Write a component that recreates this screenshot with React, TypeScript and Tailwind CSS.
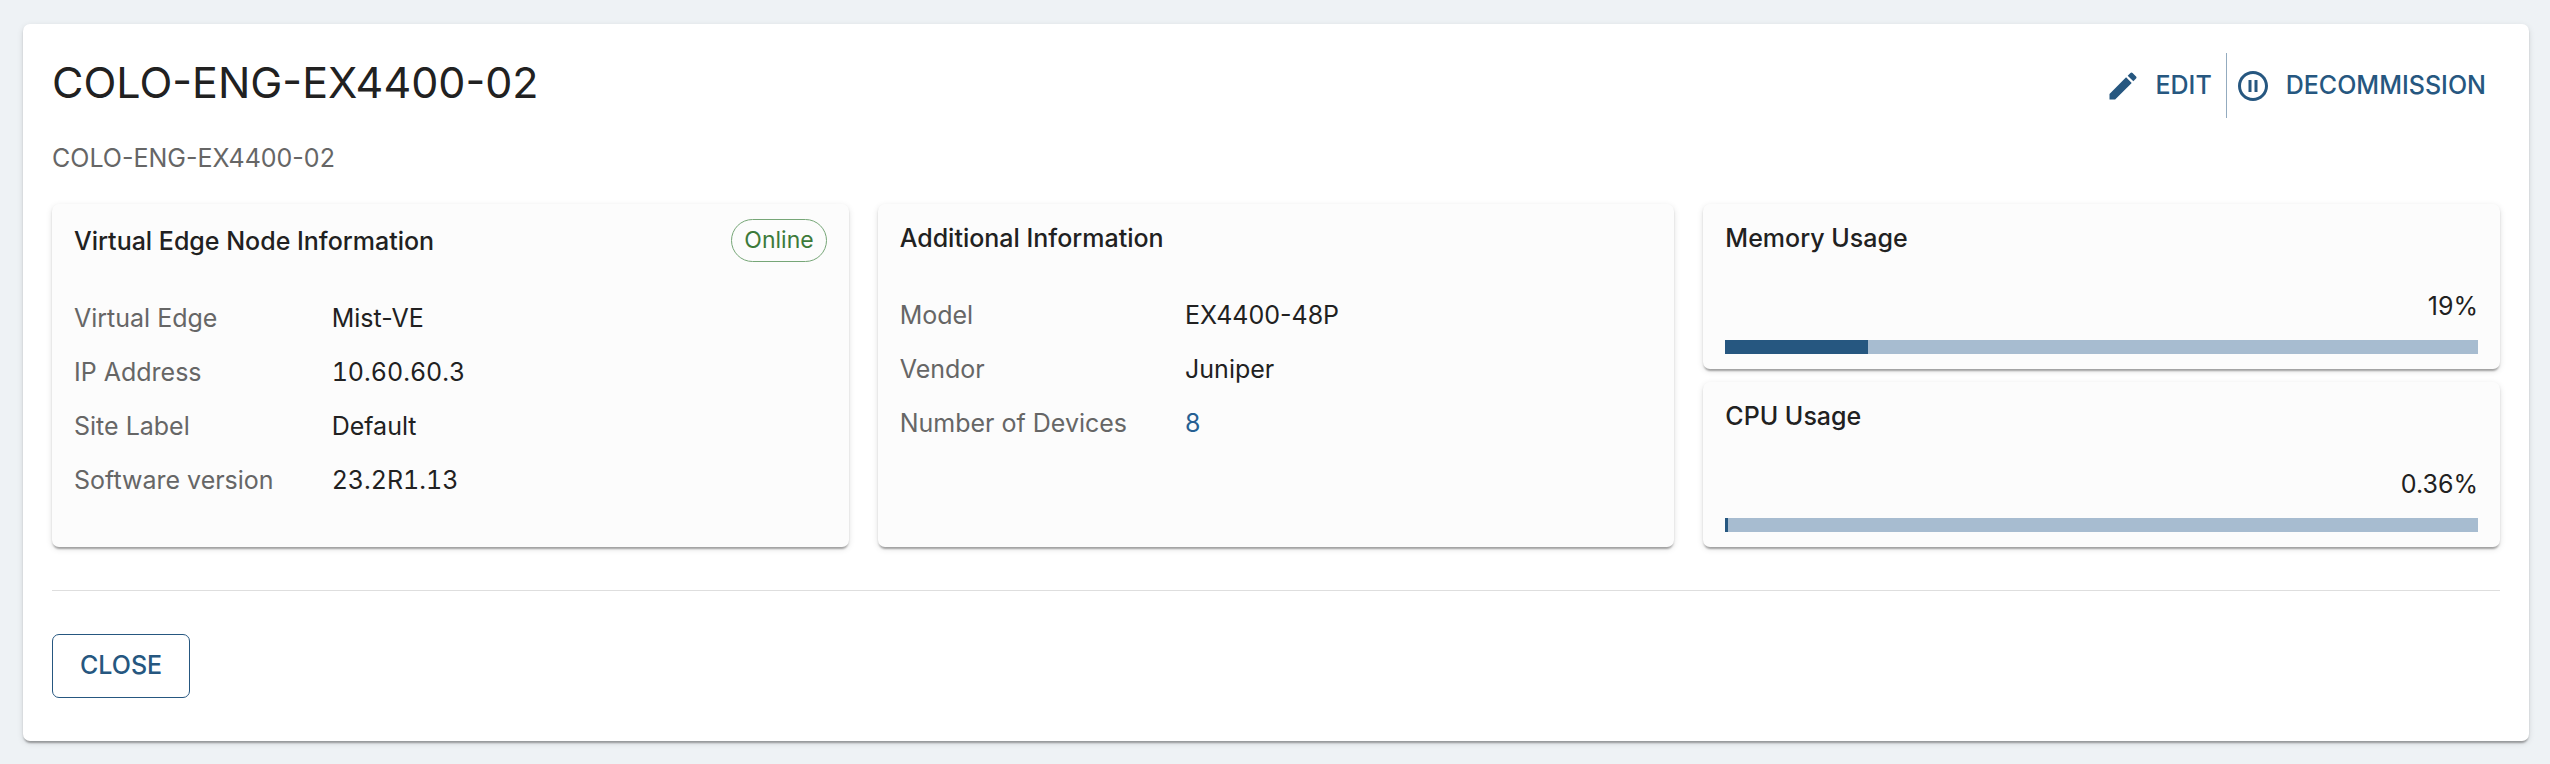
import type { ReactNode } from "react";

const CARD_SHADOW =
  "shadow-[0_4px_2px_-2px_rgba(0,0,0,0.2),0_2px_2px_rgba(0,0,0,0.14),0_2px_6px_rgba(0,0,0,0.12)]";

function Card({ children }: { children: ReactNode }) {
  return (
    <section className={`rounded-[7px] bg-[#fcfcfc] px-[22px] py-[15px] ${CARD_SHADOW}`}>
      {children}
    </section>
  );
}

function CardTitle({ children }: { children: ReactNode }) {
  return <h2 className="text-[25px] leading-[38px] font-medium">{children}</h2>;
}

function Details({ rows }: { rows: [string, ReactNode][] }) {
  return (
    <dl className="grid grid-cols-[max-content_1fr] gap-x-[58px] gap-y-4 leading-[38px]">
      {rows.map(([label, value]) => (
        <div key={label} className="contents">
          <dt className="text-[#666666]">{label}</dt>
          <dd>{value}</dd>
        </div>
      ))}
    </dl>
  );
}

function Usage({ title, value }: { title: string; value: number }) {
  return (
    <Card>
      <CardTitle>{title}</CardTitle>
      <p className="mt-[30px] text-right leading-[38px]">{value}%</p>
      <div
        role="progressbar"
        aria-label={title}
        aria-valuenow={value}
        aria-valuemin={0}
        aria-valuemax={100}
        className="mt-[15px] h-[14px] bg-[#a7bcd0]"
      >
        <div className="h-full bg-[#265780]" style={{ width: `${value}%` }} />
      </div>
    </Card>
  );
}

function EditIcon() {
  return (
    <svg viewBox="0 0 24 24" className="size-9" fill="currentColor" aria-hidden="true">
      <path d="M3 17.25V21h3.75L17.81 9.94l-3.75-3.75zM20.71 7.04c.39-.39.39-1.02 0-1.41l-2.34-2.34a.996.996 0 0 0-1.41 0l-1.83 1.83 3.75 3.75z" />
    </svg>
  );
}

function PauseIcon() {
  return (
    <svg viewBox="0 0 24 24" className="size-9" fill="currentColor" aria-hidden="true">
      <path d="M12 2C6.48 2 2 6.48 2 12s4.48 10 10 10 10-4.48 10-10S17.52 2 12 2m0 18c-4.41 0-8-3.59-8-8s3.59-8 8-8 8 3.59 8 8-3.59 8-8 8" />
      <path d="M9 8h2v8H9zm4 0h2v8h-2z" />
    </svg>
  );
}

export default function App() {
  return (
    <div className="min-h-screen bg-[#eef2f5] pt-6 pr-[21px] pb-[23px] pl-[23px] font-['Inter',sans-serif] text-[25px] text-[#212121]">
      <main className={`rounded-[7px] bg-white px-[29px] pt-[29px] pb-[43px] ${CARD_SHADOW}`}>
        <header className="flex items-start justify-between">
          <div>
            <h1 className="text-[43px] leading-[58px]">COLO-ENG-EX4400-02</h1>
            <p className="mt-7 leading-[38px] text-[#666666]">COLO-ENG-EX4400-02</p>
          </div>
          <div className="flex h-[65px] items-stretch font-medium text-[#265780]">
            <button type="button" className="flex items-center gap-[15px] pr-[14px]">
              <EditIcon />
              EDIT
            </button>
            <button
              type="button"
              className="flex items-center gap-[15px] border-l border-[#93abbf] pr-[14px] pl-2"
            >
              <PauseIcon />
              DECOMMISSION
            </button>
          </div>
        </header>

        <div className="mt-[27px] grid grid-cols-3 gap-[29px]">
          <Card>
            <div className="flex items-center justify-between">
              <CardTitle>Virtual Edge Node Information</CardTitle>
              <span className="rounded-full border border-[#76a677] px-3 text-[23px] leading-[41px] text-[#3d7a3a]">
                Online
              </span>
            </div>
            <div className="mt-[37px]">
              <Details
                rows={[
                  ["Virtual Edge", "Mist-VE"],
                  ["IP Address", <span key="ip" className="tabular-nums">10.60.60.3</span>],
                  ["Site Label", "Default"],
                  ["Software version", <span key="version" className="tabular-nums">23.2R1.13</span>],
                ]}
              />
            </div>
          </Card>

          <Card>
            <CardTitle>Additional Information</CardTitle>
            <div className="mt-[39px]">
              <Details
                rows={[
                  ["Model", "EX4400-48P"],
                  ["Vendor", "Juniper"],
                  [
                    "Number of Devices",
                    <a key="devices" href="#devices" className="text-[#265f92]">
                      8
                    </a>,
                  ],
                ]}
              />
            </div>
          </Card>

          <div className="flex flex-col gap-[13px]">
            <Usage title="Memory Usage" value={19} />
            <Usage title="CPU Usage" value={0.36} />
          </div>
        </div>

        <hr className="mt-[43px] border-[#dedede]" />
        <button
          type="button"
          className="mt-[43px] h-16 rounded-[7px] border border-[#265780] px-[27px] font-medium text-[#265780]"
        >
          CLOSE
        </button>
      </main>
    </div>
  );
}
